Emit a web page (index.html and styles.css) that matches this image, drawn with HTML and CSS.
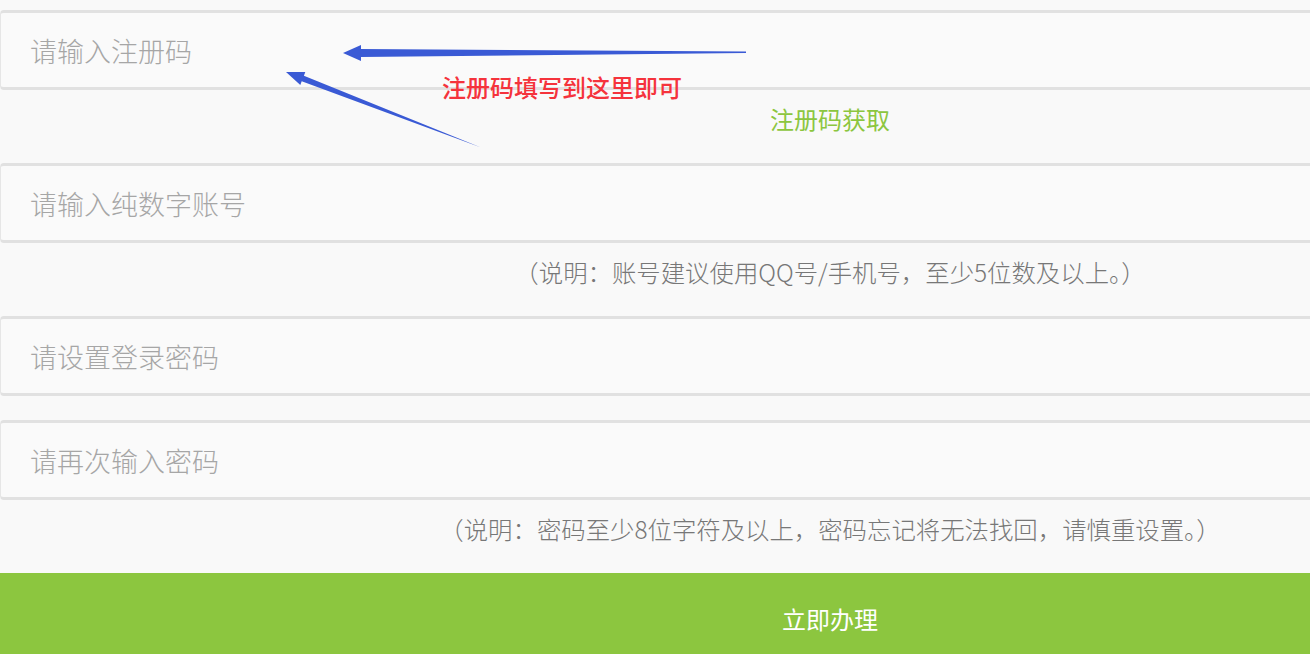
FILE: index.html
```html
<!DOCTYPE html>
<html lang="zh-CN">
<head>
<meta charset="utf-8">
<title>注册</title>
<link rel="stylesheet" href="styles.css">
</head>
<body>
<div class="page">
  <form class="form">
    <div class="field"><input class="input" type="text" placeholder="请输入注册码"></div>
    <div class="hint"><a class="get-code" href="#">注册码获取</a></div>
    <div class="field"><input class="input" type="text" placeholder="请输入纯数字账号"></div>
    <div class="hint note">（说明：账号建议使用QQ号/手机号，至少5位数及以上。）</div>
    <div class="field"><input class="input" type="password" placeholder="请设置登录密码"></div>
    <div class="field field-next"><input class="input" type="password" placeholder="请再次输入密码"></div>
    <div class="hint note">（说明：密码至少8位字符及以上，密码忘记将无法找回，请慎重设置。）</div>
    <button class="submit" type="button">立即办理</button>
  </form>
  <div class="annotation">注册码填写到这里即可</div>
  <svg class="arrows" width="800" height="160" viewBox="0 0 800 160" xmlns="http://www.w3.org/2000/svg">
    <polygon fill="#3a5ad5" points="343,53 361,45 361,49 746,51.6 746,53 361,57 361,61"/>
    <polygon fill="#3a5ad5" points="286,72 305.3,72 303.9,75.7 481,147.5 301.7,81.3 300.3,85"/>
  </svg>
</div>
</body>
</html>
```
FILE: styles.css
```css
html, body {
  margin: 0;
  padding: 0;
  background: #f9f9f9;
  overflow: hidden;
}
body {
  font-family: "Noto Sans CJK SC", "Noto Sans", sans-serif;
}
.page {
  position: relative;
  width: 1660px;
  height: 700px;
  background: #f9f9f9;
}
.form {
  display: flex;
  flex-direction: column;
  padding-top: 10px;
}
.field {
  height: 80px;
  box-sizing: border-box;
  border-top: 3px solid #e1e1e1;
  border-bottom: 3px solid #e1e1e1;
  border-left: 1px solid #e6e6e6;
  border-radius: 4px 0 0 4px;
  background: #fafafa;
  display: flex;
  align-items: center;
}
.field-next {
  margin-top: 24px;
}
.input {
  flex: 1;
  border: 0;
  outline: 0;
  background: transparent;
  padding: 0 0 0 29px;
  font-family: inherit;
  font-size: 27px;
  font-weight: 300;
  color: #333;
}
.input::placeholder {
  color: #a6a6a6;
}
.hint {
  height: 73px;
  box-sizing: border-box;
  padding-top: 11px;
  line-height: 36px;
  text-align: center;
  font-size: 24px;
}
.get-code {
  color: #8cc63f;
  text-decoration: none;
}
.note {
  color: #777;
  font-size: 24.4px;
  font-weight: 300;
}
.submit {
  height: 94px;
  border: 0;
  background: #8cc63f;
  color: #fff;
  font-family: inherit;
  font-size: 24px;
  padding: 0 0 4px;
}
.annotation {
  position: absolute;
  left: 442px;
  top: 70px;
  line-height: 34px;
  font-size: 24px;
  color: #f5333c;
  font-weight: 500;
}
.arrows {
  position: absolute;
  left: 0;
  top: 0;
  pointer-events: none;
}
```
